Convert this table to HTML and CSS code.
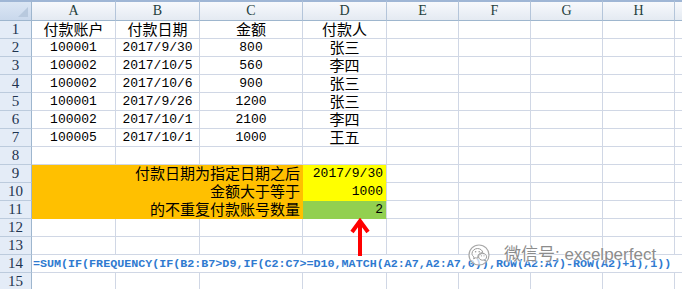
FILE: index.html
```html
<!DOCTYPE html>
<html>
<head>
<meta charset="utf-8">
<link rel="stylesheet" href="styles.css">
</head>
<body>
<div class="sheet">
  <div class="row hdr">
    <div class="corner"></div>
    <div class="ch">A</div><div class="ch">B</div><div class="ch">C</div><div class="ch">D</div><div class="ch">E</div><div class="ch">F</div><div class="ch">G</div><div class="ch">H</div><div class="ch"></div>
  </div>
  <div class="row">
    <div class="rh">1</div>
    <div class="c cn">付款账户</div><div class="c cn">付款日期</div><div class="c cn">金额</div><div class="c cn">付款人</div><div class="c"></div><div class="c"></div><div class="c"></div><div class="c"></div><div class="c"></div>
  </div>
  <div class="row">
    <div class="rh">2</div>
    <div class="c num">100001</div><div class="c num">2017/9/30</div><div class="c num">800</div><div class="c cn">张三</div><div class="c"></div><div class="c"></div><div class="c"></div><div class="c"></div><div class="c"></div>
  </div>
  <div class="row">
    <div class="rh">3</div>
    <div class="c num">100002</div><div class="c num">2017/10/5</div><div class="c num">560</div><div class="c cn">李四</div><div class="c"></div><div class="c"></div><div class="c"></div><div class="c"></div><div class="c"></div>
  </div>
  <div class="row">
    <div class="rh">4</div>
    <div class="c num">100002</div><div class="c num">2017/10/6</div><div class="c num">900</div><div class="c cn">张三</div><div class="c"></div><div class="c"></div><div class="c"></div><div class="c"></div><div class="c"></div>
  </div>
  <div class="row">
    <div class="rh">5</div>
    <div class="c num">100001</div><div class="c num">2017/9/26</div><div class="c num">1200</div><div class="c cn">张三</div><div class="c"></div><div class="c"></div><div class="c"></div><div class="c"></div><div class="c"></div>
  </div>
  <div class="row">
    <div class="rh">6</div>
    <div class="c num">100002</div><div class="c num">2017/10/1</div><div class="c num">2100</div><div class="c cn">李四</div><div class="c"></div><div class="c"></div><div class="c"></div><div class="c"></div><div class="c"></div>
  </div>
  <div class="row">
    <div class="rh">7</div>
    <div class="c num">100005</div><div class="c num">2017/10/1</div><div class="c num">1000</div><div class="c cn">王五</div><div class="c"></div><div class="c"></div><div class="c"></div><div class="c"></div><div class="c"></div>
  </div>
  <div class="row">
    <div class="rh">8</div>
    <div class="c"></div><div class="c"></div><div class="c"></div><div class="c"></div><div class="c"></div><div class="c"></div><div class="c"></div><div class="c"></div><div class="c"></div>
  </div>
  <div class="row">
    <div class="rh">9</div>
    <div class="c label cn">付款日期为指定日期之后</div><div class="c yellow num right">2017/9/30</div><div class="c"></div><div class="c"></div><div class="c"></div><div class="c"></div><div class="c"></div>
  </div>
  <div class="row">
    <div class="rh">10</div>
    <div class="c label cn">金额大于等于</div><div class="c yellow num right">1000</div><div class="c"></div><div class="c"></div><div class="c"></div><div class="c"></div><div class="c"></div>
  </div>
  <div class="row">
    <div class="rh">11</div>
    <div class="c label cn">的不重复付款账号数量</div><div class="c green num right">2</div><div class="c"></div><div class="c"></div><div class="c"></div><div class="c"></div><div class="c"></div>
  </div>
  <div class="row">
    <div class="rh">12</div>
    <div class="c"></div><div class="c"></div><div class="c"></div><div class="c"></div><div class="c"></div><div class="c"></div><div class="c"></div><div class="c"></div><div class="c"></div>
  </div>
  <div class="row">
    <div class="rh">13</div>
    <div class="c"></div><div class="c"></div><div class="c"></div><div class="c"></div><div class="c"></div><div class="c"></div><div class="c"></div><div class="c"></div><div class="c"></div>
  </div>
  <div class="row">
    <div class="rh">14</div>
    <div class="c formula">=SUM(IF(FREQUENCY(IF(B2:B7&gt;D9,IF(C2:C7&gt;=D10,MATCH(A2:A7,A2:A7,0)),ROW(A2:A7)-ROW(A2)+1),1))</div>
  </div>
  <div class="row">
    <div class="rh">15</div>
    <div class="c"></div><div class="c"></div><div class="c"></div><div class="c"></div><div class="c"></div><div class="c"></div><div class="c"></div><div class="c"></div><div class="c"></div>
  </div>

  <svg class="arrow" width="24" height="40" viewBox="0 0 24 40">
    <path d="M12 3 L12 38" stroke="#ff0000" stroke-width="4" fill="none"/>
    <path d="M4 14 L12 3 L20 14" stroke="#ff0000" stroke-width="4" fill="none" stroke-linejoin="miter"/>
  </svg>

  <div class="wm">
    <svg class="wm-icon" width="24" height="22" viewBox="0 0 24 22">
      <circle cx="12" cy="11" r="10" fill="rgba(255,255,255,0.7)" stroke="#a8a8a8" stroke-width="1.2"/>
      <path d="M5 9.5 C5 6.5 7.8 4.5 10.5 4.5 C13.2 4.5 15.5 6.3 15.8 8.6 C13 8.6 10.8 10.5 10.8 12.8 C10.8 13.3 10.9 13.7 11 14 C10.2 14.1 9.3 14 8.6 13.8 L6.6 14.8 L7.1 13 C5.8 12.2 5 11 5 9.5 Z" fill="none" stroke="#9a9a9a" stroke-width="1"/>
      <path d="M11.6 12.8 C11.6 10.9 13.5 9.4 15.7 9.4 C17.9 9.4 19.6 10.9 19.6 12.8 C19.6 13.9 19 14.8 18.1 15.4 L18.5 16.8 L16.9 16 C16.5 16.1 16.1 16.2 15.7 16.2 C13.5 16.2 11.6 14.7 11.6 12.8 Z" fill="none" stroke="#9a9a9a" stroke-width="1"/>
      <circle cx="8.6" cy="7.8" r="0.8" fill="#9a9a9a"/>
      <circle cx="12.2" cy="7.8" r="0.8" fill="#9a9a9a"/>
      <circle cx="14.4" cy="11.8" r="0.6" fill="#9a9a9a"/>
      <circle cx="17" cy="11.8" r="0.6" fill="#9a9a9a"/>
    </svg>
    <span class="wm-text">微信号: excelperfect</span>
  </div>
</div>
</body>
</html>
```

FILE: styles.css
```css
html, body {
  margin: 0;
  padding: 0;
  background: #ffffff;
}

.sheet {
  position: relative;
  width: 682px;
  height: 289px;
  overflow: hidden;
}

.row {
  display: grid;
  grid-template-columns: 32px 84px 84px 103px 84px 72px 72px 72px 72px 72px;
  height: 18px;
}

.row.hdr {
  height: 21px;
}

.corner {
  box-sizing: border-box;
  position: relative;
  background: linear-gradient(#dbe6f4, #c9d8ec);
  border-top: 2px solid #9fb6d5;
  border-right: 1px solid #9eb6ce;
  border-bottom: 1px solid #9eb6ce;
}

.corner::after {
  content: "";
  position: absolute;
  right: 3px;
  bottom: 3px;
  width: 0;
  height: 0;
  border-left: 10px solid transparent;
  border-bottom: 10px solid #b8c9de;
}

.ch {
  box-sizing: border-box;
  background: linear-gradient(#f7f9fc, #e4eaf2);
  border-top: 2px solid #9fb6d5;
  border-right: 1px solid #b4c5da;
  border-bottom: 1px solid #9eb6ce;
  display: flex;
  align-items: center;
  justify-content: center;
  font-family: "Liberation Serif", serif;
  font-size: 14px;
  color: #24403c;
  line-height: 1;
}

.rh {
  box-sizing: border-box;
  background: #e4ecf7;
  border-right: 1px solid #9eb6ce;
  border-bottom: 1px solid #bccbdd;
  display: flex;
  align-items: center;
  justify-content: center;
  font-family: "Liberation Serif", serif;
  font-size: 15px;
  color: #1e3450;
  line-height: 1;
}

.c {
  box-sizing: border-box;
  border-right: 1px solid #d0d7e5;
  border-bottom: 1px solid #d0d7e5;
  display: flex;
  align-items: center;
  justify-content: center;
  color: #000000;
  white-space: nowrap;
  min-width: 0;
}

.cn {
  font-family: "Noto Sans CJK SC", sans-serif;
  font-size: 15px;
  line-height: 16px;
  padding-bottom: 1px;
}

.num {
  font-family: "Liberation Mono", monospace;
  font-size: 13px;
  line-height: 16px;
}

.label {
  grid-column: span 3;
  background: #ffc000;
  border-right: none;
  border-bottom: 1px solid #ffc000;
  justify-content: flex-end;
  padding-right: 3px;
}

.yellow {
  background: #ffff00;
  border-bottom-color: #ffff00;
}

.green {
  background: #92d050;
  border-bottom-color: #92d050;
}

.right {
  justify-content: flex-end;
  padding-right: 3px;
}

.formula {
  grid-column: span 9;
  justify-content: flex-start;
  padding-left: 1px;
  border-right: none;
  font-family: "Liberation Mono", monospace;
  font-size: 11.7px;
  font-weight: bold;
  color: #2f7ad0;
  overflow: visible;
}

.arrow {
  position: absolute;
  left: 348px;
  top: 218px;
}

.wm {
  position: absolute;
  left: 467px;
  top: 244px;
  display: flex;
  align-items: center;
  gap: 13px;
}

.wm-text {
  font-family: "Liberation Sans", "Noto Sans CJK SC", sans-serif;
  font-size: 17px;
  line-height: 20px;
  color: #8c8c8c;
  text-shadow: 0 0 2px #ffffff, 0 0 2px #ffffff, 0 0 1px #ffffff;
}
```
